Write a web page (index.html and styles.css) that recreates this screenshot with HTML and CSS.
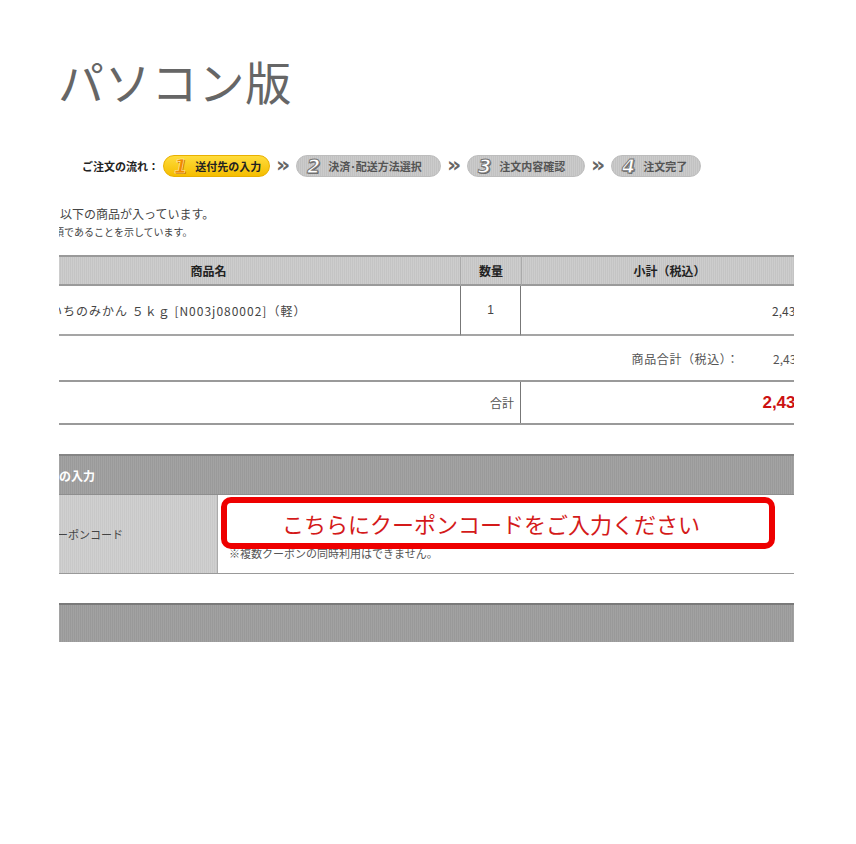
FILE: index.html
```html
<!DOCTYPE html>
<html lang="ja">
<head>
<meta charset="utf-8">
<title>パソコン版</title>
<link rel="stylesheet" href="styles.css">
</head>
<body>
<h1 class="title">パソコン版</h1>

<div class="flow">
  <span class="flow-label">ご注文の流れ：</span>
  <span class="step step-on step-w1"><span class="num">1</span><span class="step-text">送付先の入力</span></span>
  <span class="chev">&raquo;</span>
  <span class="step step-w2"><span class="num">2</span><span class="step-text">決済･配送方法選択</span></span>
  <span class="chev">&raquo;</span>
  <span class="step step-w3"><span class="num">3</span><span class="step-text">注文内容確認</span></span>
  <span class="chev">&raquo;</span>
  <span class="step step-w4"><span class="num">4</span><span class="step-text">注文完了</span></span>
</div>

<div class="clip">
  <p class="lead">以下の商品が入っています。</p>
  <p class="note-req">※は必須であることを示しています。</p>

  <div class="inner">
    <div class="cart">
      <div class="cell th">商品名</div>
      <div class="cell th th-sep">数量</div>
      <div class="cell th th-sep">小計（税込）</div>

      <div class="cell td td-name">いちのみかん ５ｋｇ [N003j080002]（軽）</div>
      <div class="cell td td-qty">1</div>
      <div class="cell td td-sub">2,430円</div>
    </div>

    <div class="sum">
      <span class="sum-label">商品合計（税込）：</span>
      <span class="sum-val">2,430円</span>
    </div>

    <div class="total">
      <div class="total-label">合計</div>
      <div class="total-val">2,430<span class="yen">円</span></div>
    </div>

    <div class="sec-head">クーポンの入力</div>
    <div class="coupon">
      <div class="coupon-label">クーポンコード</div>
      <div class="coupon-body">
        <div class="coupon-input"></div>
        <p class="coupon-note">※複数クーポンの同時利用はできません。</p>
      </div>
      <div class="callout">こちらにクーポンコードをご入力ください</div>
    </div>

    <div class="bottom-bar"></div>
  </div>
</div>
</body>
</html>
```

FILE: styles.css
```css
html, body {
  margin: 0;
  padding: 0;
  background: #fff;
}
body {
  font-family: "Liberation Sans", "Noto Sans CJK JP", sans-serif;
  color: #333;
}
.title {
  margin: 52px 0 0 58px;
  font-family: "Noto Sans CJK JP", sans-serif;
  font-weight: 400;
  font-size: 46px;
  line-height: 56px;
  color: #666;
  letter-spacing: 0.8px;
}

/* order flow */
.flow {
  margin: 46px 0 0 82px;
  height: 24px;
  display: flex;
  align-items: center;
}
.flow-label {
  font-family: "Noto Sans CJK JP", sans-serif;
  font-weight: 700;
  font-size: 11px;
  color: #222;
  width: 81px;
  white-space: nowrap;
}
.step {
  box-sizing: border-box;
  height: 22px;
  border-radius: 11px;
  display: flex;
  align-items: center;
  padding-left: 10px;
  background: repeating-linear-gradient(90deg, #cbcbcb 0 1px, #c2c2c2 1px 2px);
  border: 1px solid #bdbdbd;
}
.step-w1 { width: 107px; }
.step-w2 { width: 145px; }
.step-w3 { width: 118px; }
.step-w4 { width: 90px; }
.step-on {
  background: linear-gradient(#ffdc3c, #f5bd00);
  border-color: #e9b000;
}
.num {
  font-family: "DejaVu Sans", sans-serif;
  font-weight: 700;
  font-style: italic;
  font-size: 19px;
  line-height: 20px;
  color: #fff;
  -webkit-text-stroke: 1px #777;
  text-shadow: 1px 1px 0 #666;
  margin-right: 8px;
}
.step-on .num {
  color: #f08a00;
  -webkit-text-stroke: 0.6px #fff0b0;
  text-shadow: 1px 1px 0 #c87000;
}
.step-text {
  font-family: "Noto Sans CJK JP", sans-serif;
  font-weight: 700;
  font-size: 11px;
  color: #555;
  white-space: nowrap;
}
.step-on .step-text { color: #222; }
.chev {
  font-family: "DejaVu Sans", sans-serif;
  font-weight: 700;
  font-size: 22px;
  line-height: 22px;
  color: #666;
  width: 26px;
  text-align: center;
  padding-bottom: 3px;
}

/* clipped content */
.clip {
  margin-left: 59px;
  width: 735px;
  overflow: hidden;
  padding-bottom: 40px;
}
.lead {
  margin: 28px 0 0 1px;
  font-family: "Noto Sans CJK JP", sans-serif;
  font-size: 12px;
  line-height: 16px;
  color: #444;
}
.note-req {
  margin: 1px 0 0 -35px;
  font-family: "Noto Sans CJK JP", sans-serif;
  font-size: 10px;
  line-height: 18px;
  color: #444;
  white-space: nowrap;
}
.inner {
  margin-top: 14px;
  margin-left: -102px;
  width: 860px;
}

.cart {
  display: grid;
  grid-template-columns: 503px 61px 296px;
}
.cell {
  box-sizing: border-box;
  display: flex;
  align-items: center;
  font-family: "Noto Sans CJK JP", sans-serif;
}
.th {
  height: 31px;
  justify-content: center;
  font-weight: 700;
  font-size: 12px;
  color: #222;
  background: repeating-linear-gradient(90deg, #cdcdcd 0 1px, #c4c4c4 1px 2px);
  border-top: 2px solid #9a9a9a;
  border-bottom: 2px solid #9a9a9a;
}
.th-sep { border-left: 1px solid #aaa; }
.td {
  height: 50px;
  font-size: 12px;
  color: #444;
  border-bottom: 2px solid #a5a5a5;
}
.td-name {
  padding-left: 93px;
  letter-spacing: 1px;
  white-space: nowrap;
}
.td-qty {
  justify-content: center;
  font-family: "Liberation Sans", sans-serif;
  font-size: 12px;
  border-left: 1px solid #777;
  border-right: 1px solid #777;
}
.td-sub {
  justify-content: flex-end;
  padding-right: 3px;
  font-size: 12px;
}

.sum {
  height: 44px;
  display: flex;
  justify-content: flex-end;
  align-items: center;
  font-family: "Noto Sans CJK JP", sans-serif;
  font-size: 12px;
  color: #555;
}
.sum-label {
  letter-spacing: 0.6px;
}
.sum-val {
  margin-left: 34px;
  margin-right: 2px;
  font-size: 12px;
}

.total {
  height: 45px;
  box-sizing: border-box;
  display: grid;
  grid-template-columns: 564px 296px;
  border-top: 2px solid #9a9a9a;
  border-bottom: 2px solid #9a9a9a;
  font-family: "Noto Sans CJK JP", sans-serif;
}
.total-label {
  display: flex;
  align-items: center;
  justify-content: flex-end;
  padding-right: 6px;
  font-size: 12px;
  color: #555;
  border-right: 1px solid #777;
}
.total-val {
  display: flex;
  align-items: center;
  justify-content: flex-end;
  padding-right: 0;
  font-family: "Liberation Sans", "Noto Sans CJK JP", sans-serif;
  font-size: 17px;
  font-weight: 700;
  color: #cc1111;
}
.yen {
  font-family: "Noto Sans CJK JP", sans-serif;
  font-size: 12px;
}

.sec-head {
  margin-top: 29px;
  height: 40px;
  box-sizing: border-box;
  display: flex;
  align-items: center;
  padding-left: 54px;
  font-family: "Noto Sans CJK JP", sans-serif;
  font-weight: 700;
  font-size: 12px;
  color: #fff;
  background: repeating-linear-gradient(90deg, #a3a3a3 0 1px, #9a9a9a 1px 2px);
  border-top: 2px solid #858585;
}
.coupon {
  position: relative;
  display: grid;
  grid-template-columns: 261px 599px;
  height: 80px;
  box-sizing: border-box;
  border-top: 1px solid #8e8e8e;
  border-bottom: 1px solid #999;
}
.coupon-label {
  display: flex;
  align-items: center;
  padding-left: 89px;
  font-family: "Noto Sans CJK JP", sans-serif;
  font-size: 11px;
  color: #444;
  background: repeating-linear-gradient(90deg, #d0d0d0 0 1px, #c8c8c8 1px 2px);
  border-right: 1px solid #aaa;
}
.coupon-body {
  padding: 10px 0 0 11px;
}
.coupon-input {
  width: 220px;
  height: 24px;
  border: 1px solid #aaa;
  box-sizing: border-box;
}
.coupon-note {
  margin: 17px 0 0;
  font-family: "Noto Sans CJK JP", sans-serif;
  font-size: 11px;
  line-height: 14px;
  color: #555;
}
.callout {
  position: absolute;
  left: 264px;
  top: 2px;
  width: 554px;
  height: 52px;
  box-sizing: border-box;
  border: 6px solid #ee0000;
  border-radius: 10px;
  background: #fff;
  display: flex;
  align-items: center;
  justify-content: center;
  padding-right: 14px;
  font-family: "Noto Sans CJK JP", sans-serif;
  font-size: 22px;
  color: #d41a1a;
  white-space: nowrap;
}

.bottom-bar {
  margin-top: 29px;
  height: 39px;
  box-sizing: border-box;
  background: repeating-linear-gradient(90deg, #a2a2a2 0 1px, #999 1px 2px);
  border-top: 2px solid #7a7a7a;
}
```
